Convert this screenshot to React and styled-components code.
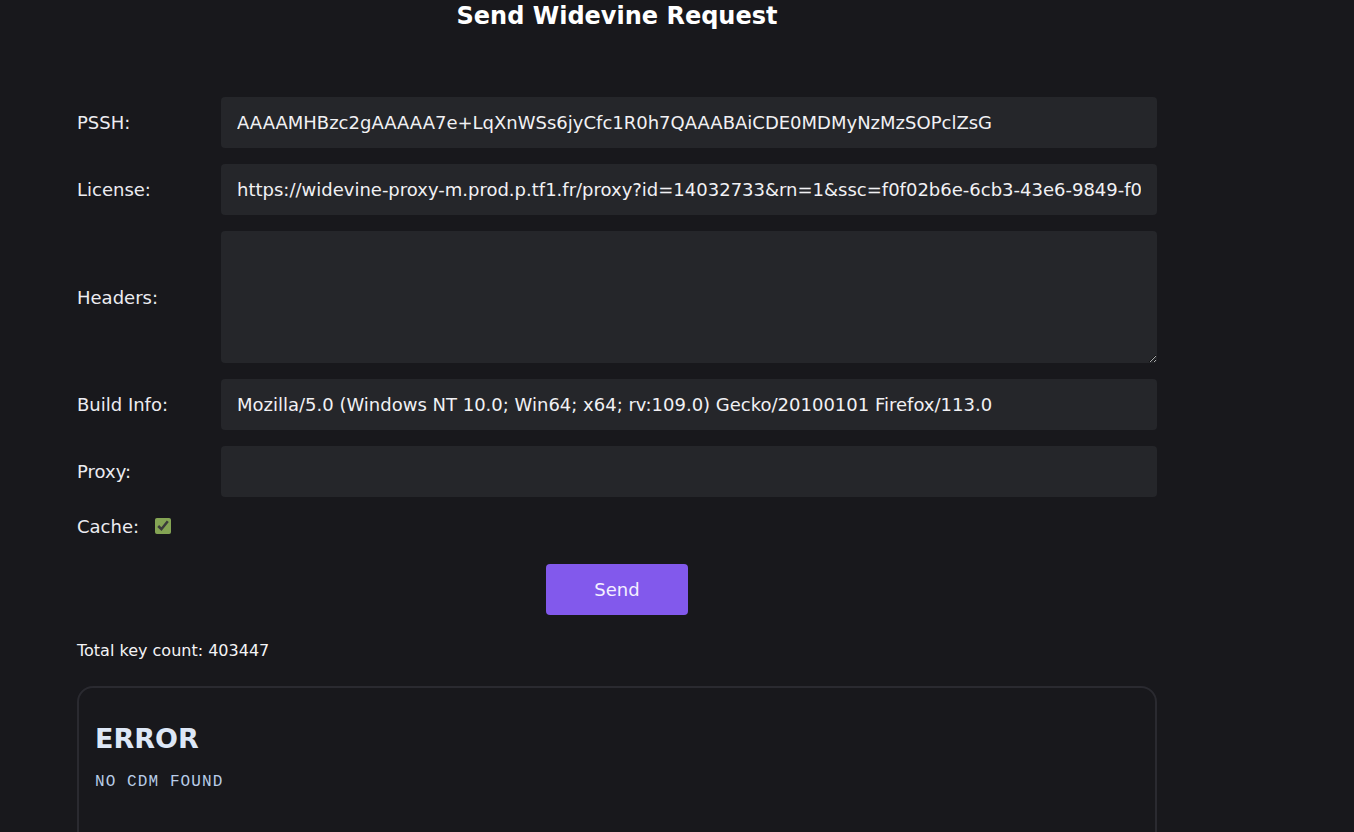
import React from "react";
import styled, { createGlobalStyle } from "styled-components";

const GlobalStyle = createGlobalStyle`
  html, body {
    margin: 0;
    padding: 0;
    background: #18181c;
    color: #ececf1;
    font-family: "DejaVu Sans", sans-serif;
  }
`;

const Page = styled.div`
  width: 1080px;
  margin-left: 77px;
  display: flex;
  flex-direction: column;
`;

const Title = styled.h1`
  margin: 0;
  padding-top: 2px;
  height: 95px;
  font-size: 24px;
  font-weight: bold;
  text-align: center;
  color: #ffffff;
  line-height: 28px;
`;

const Form = styled.div`
  display: flex;
  flex-direction: column;
  gap: 16px;
`;

const Row = styled.div`
  display: grid;
  grid-template-columns: 144px 1fr;
  align-items: center;
`;

const Label = styled.label`
  font-size: 18px;
  color: #ececf1;
`;

const Input = styled.input`
  box-sizing: border-box;
  height: 51px;
  width: 100%;
  padding: 0 16px;
  border: none;
  border-radius: 4px;
  background: #25262a;
  color: #f1f1f4;
  font-family: "DejaVu Sans", sans-serif;
  font-size: 18px;
  outline: none;
`;

const TextArea = styled.textarea`
  box-sizing: border-box;
  height: 132px;
  width: 100%;
  padding: 12px 16px;
  border: none;
  border-radius: 4px;
  background: #25262a;
  color: #f1f1f4;
  font-family: "DejaVu Sans", sans-serif;
  font-size: 18px;
  outline: none;
  display: block;
`;

const CacheRow = styled.div`
  display: flex;
  align-items: center;
  gap: 16px;
  height: 26px;
`;

const Check = styled.input`
  margin: 0;
  width: 16px;
  height: 16px;
  accent-color: #84a454;
`;

const ButtonWrap = styled.div`
  display: flex;
  justify-content: center;
  margin-top: 25px;
`;

const SendButton = styled.button`
  width: 142px;
  height: 51px;
  border: none;
  border-radius: 4px;
  background: #8259ec;
  color: #f4f0ff;
  font-family: "DejaVu Sans", sans-serif;
  font-size: 18px;
  cursor: pointer;
`;

const KeyCount = styled.p`
  margin: 24px 0 0;
  font-size: 16px;
  line-height: 24px;
  color: #f4f4f6;
`;

const ResultBox = styled.div`
  margin-top: 23px;
  border: 2px solid #2a2a30;
  border-radius: 16px;
  padding: 16px 16px 40px;
  min-height: 120px;
`;

const ResultTitle = styled.h2`
  margin: 19px 0 19px;
  font-size: 27px;
  font-weight: bold;
  color: #dde7f6;
`;

const ResultText = styled.pre`
  margin: 0;
  font-family: "Liberation Mono", monospace;
  font-size: 16px;
  letter-spacing: 1.1px;
  color: #b9cde8;
`;

export default function App() {
  return (
    <>
      <GlobalStyle />
      <Page>
        <Title>Send Widevine Request</Title>
        <Form>
          <Row>
            <Label>PSSH:</Label>
            <Input defaultValue="AAAAMHBzc2gAAAAA7e+LqXnWSs6jyCfc1R0h7QAAABAiCDE0MDMyNzMzSOPclZsG" />
          </Row>
          <Row>
            <Label>License:</Label>
            <Input defaultValue="https://widevine-proxy-m.prod.p.tf1.fr/proxy?id=14032733&rn=1&ssc=f0f02b6e-6cb3-43e6-9849-f0" />
          </Row>
          <Row>
            <Label>Headers:</Label>
            <TextArea />
          </Row>
          <Row>
            <Label>Build Info:</Label>
            <Input defaultValue="Mozilla/5.0 (Windows NT 10.0; Win64; x64; rv:109.0) Gecko/20100101 Firefox/113.0" />
          </Row>
          <Row>
            <Label>Proxy:</Label>
            <Input />
          </Row>
          <CacheRow>
            <Label>Cache:</Label>
            <Check type="checkbox" defaultChecked />
          </CacheRow>
        </Form>
        <ButtonWrap>
          <SendButton>Send</SendButton>
        </ButtonWrap>
        <KeyCount>Total key count: 403447</KeyCount>
        <ResultBox>
          <ResultTitle>ERROR</ResultTitle>
          <ResultText>NO CDM FOUND</ResultText>
        </ResultBox>
      </Page>
    </>
  );
}
